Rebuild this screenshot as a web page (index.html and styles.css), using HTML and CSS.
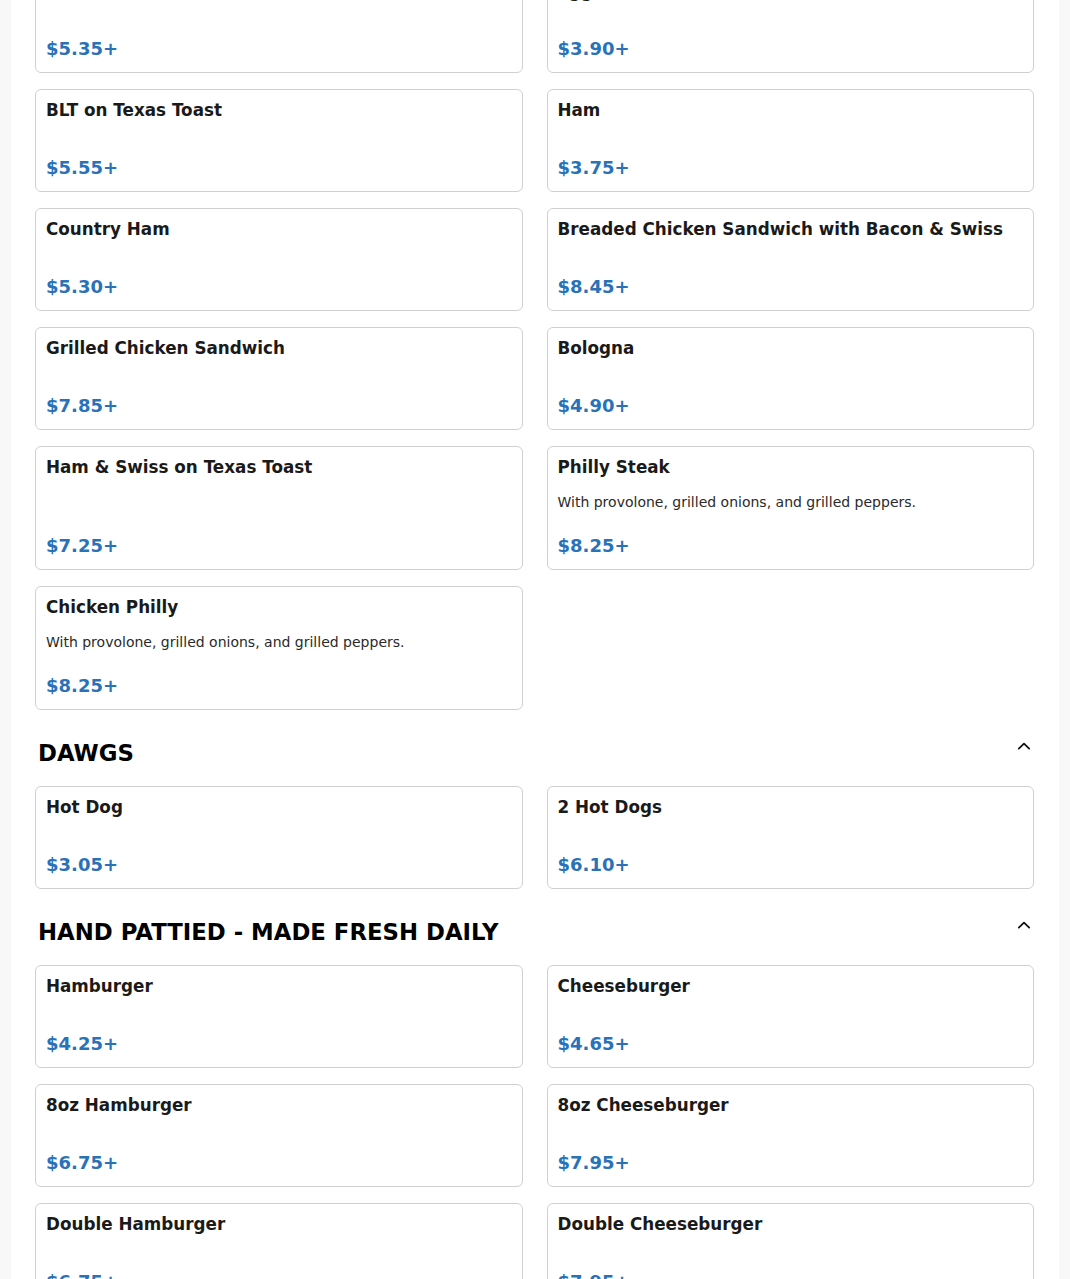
FILE: index.html
```html
<!DOCTYPE html>
<html lang="en">
<head>
<meta charset="utf-8">
<title>Menu</title>
<link rel="stylesheet" href="styles.css">
</head>
<body>
<div class="page">
  <section class="section first">
    <div class="grid">
      <div class="card"><div class="title">Grilled Cheese</div><div class="desc"></div><div class="price">$5.35+</div></div>
      <div class="card"><div class="title">Egg Sandwich</div><div class="desc"></div><div class="price">$3.90+</div></div>
      <div class="card"><div class="title">BLT on Texas Toast</div><div class="desc"></div><div class="price">$5.55+</div></div>
      <div class="card"><div class="title">Ham</div><div class="desc"></div><div class="price">$3.75+</div></div>
      <div class="card"><div class="title">Country Ham</div><div class="desc"></div><div class="price">$5.30+</div></div>
      <div class="card"><div class="title">Breaded Chicken Sandwich with Bacon &amp; Swiss</div><div class="desc"></div><div class="price">$8.45+</div></div>
      <div class="card"><div class="title">Grilled Chicken Sandwich</div><div class="desc"></div><div class="price">$7.85+</div></div>
      <div class="card"><div class="title">Bologna</div><div class="desc"></div><div class="price">$4.90+</div></div>
      <div class="card"><div class="title">Ham &amp; Swiss on Texas Toast</div><div class="desc"></div><div class="price">$7.25+</div></div>
      <div class="card"><div class="title">Philly Steak</div><div class="desc">With provolone, grilled onions, and grilled peppers.</div><div class="price">$8.25+</div></div>
      <div class="card"><div class="title">Chicken Philly</div><div class="desc">With provolone, grilled onions, and grilled peppers.</div><div class="price">$8.25+</div></div>
    </div>
  </section>

  <section class="section">
    <div class="section-head">
      <h2 class="section-title">DAWGS</h2>
      <svg class="chev" width="20" height="20" viewBox="0 0 20 20"><path d="M4.8 12.6 L10 7.6 L15.2 12.6" fill="none" stroke="#111" stroke-width="1.8" stroke-linecap="round" stroke-linejoin="round"/></svg>
    </div>
    <div class="grid">
      <div class="card"><div class="title">Hot Dog</div><div class="desc"></div><div class="price">$3.05+</div></div>
      <div class="card"><div class="title">2 Hot Dogs</div><div class="desc"></div><div class="price">$6.10+</div></div>
    </div>
  </section>

  <section class="section">
    <div class="section-head">
      <h2 class="section-title">HAND PATTIED - MADE FRESH DAILY</h2>
      <svg class="chev" width="20" height="20" viewBox="0 0 20 20"><path d="M4.8 12.6 L10 7.6 L15.2 12.6" fill="none" stroke="#111" stroke-width="1.8" stroke-linecap="round" stroke-linejoin="round"/></svg>
    </div>
    <div class="grid">
      <div class="card"><div class="title">Hamburger</div><div class="desc"></div><div class="price">$4.25+</div></div>
      <div class="card"><div class="title">Cheeseburger</div><div class="desc"></div><div class="price">$4.65+</div></div>
      <div class="card"><div class="title">8oz Hamburger</div><div class="desc"></div><div class="price">$6.75+</div></div>
      <div class="card"><div class="title">8oz Cheeseburger</div><div class="desc"></div><div class="price">$7.95+</div></div>
      <div class="card"><div class="title">Double Hamburger</div><div class="desc"></div><div class="price">$6.75+</div></div>
      <div class="card"><div class="title">Double Cheeseburger</div><div class="desc"></div><div class="price">$7.95+</div></div>
    </div>
  </section>
</div>
</body>
</html>
```

FILE: styles.css
```css
html, body {
  margin: 0;
  padding: 0;
}
body {
  background: #f8f8f8;
  font-family: "DejaVu Sans", "Liberation Sans", sans-serif;
  color: #1a1a1a;
  overflow: hidden;
}
.page {
  width: 1048px;
  margin-left: 11px;
  background: #ffffff;
  padding: 0 25px 40px 24px;
  box-sizing: border-box;
  min-height: 1400px;
}
.section.first {
  margin-top: -30px;
}
.section-head {
  display: flex;
  justify-content: space-between;
  align-items: flex-start;
  padding: 0 0 0 3px;
  margin-top: 26px;
  margin-bottom: 16px;
}
.section-title {
  margin: 0;
  font-size: 22.8px;
  line-height: 34px;
  font-weight: bold;
  color: #000;
  letter-spacing: 0;
}
.chev {
  display: block;
}
.grid {
  display: grid;
  grid-template-columns: 1fr 1fr;
  column-gap: 24px;
  row-gap: 16px;
}
.card {
  display: flex;
  flex-direction: column;
  border: 1px solid #d0d0d0;
  border-radius: 6px;
  padding: 10px;
  background: #fff;
}
.title {
  font-size: 16.8px;
  line-height: 20px;
  font-weight: bold;
  color: #1a1a1a;
}
.desc {
  margin-top: 15px;
  margin-bottom: 19px;
  font-size: 14px;
  line-height: 21px;
  color: #2a2a2a;
}
.price {
  margin-top: auto;
  font-size: 18px;
  line-height: 27px;
  font-weight: bold;
  color: #2a72b8;
}
```
